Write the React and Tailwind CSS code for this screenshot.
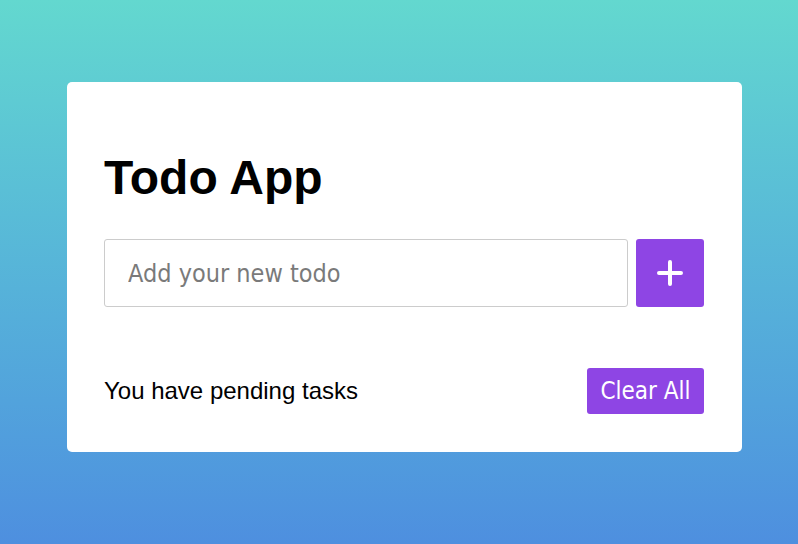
import React, { useState } from 'react';

export default function App() {
  const [text, setText] = useState('');

  return (
    <div className="min-h-screen w-full bg-gradient-to-b from-[#63d8cf] to-[#4e8fdf] pt-[82px] pl-[67px]">
      <div className="w-[675px] h-[370px] bg-white rounded-[5px] pl-[37px] pr-[38px] pt-[68px] flex flex-col">
        <h1 className="text-[48px] leading-[55px] font-bold text-black font-['Liberation_Sans',Arial,sans-serif]">
          Todo App
        </h1>

        <div className="mt-[34px] flex gap-[8px]">
          <input
            value={text}
            onChange={(e) => setText(e.target.value)}
            placeholder="Add your new todo"
            className="w-[524px] h-[68px] border border-[#cccccc] rounded-[3px] px-[23px] text-[25px] outline-none placeholder:text-[#7a7a7a] font-['DejaVu_Sans_Condensed','DejaVu_Sans',sans-serif]"
          />
          <button className="w-[68px] h-[68px] bg-[#8e45e4] rounded-[3px] flex items-center justify-center">
            <svg width="28" height="28" viewBox="0 0 28 28" fill="none" stroke="white" strokeWidth="4" strokeLinecap="round">
              <path d="M14 3v22M3 14h22" />
            </svg>
          </button>
        </div>

        <div className="mt-[61px] flex items-center justify-between">
          <span className="text-[24px] text-black font-['Liberation_Sans',Arial,sans-serif]">
            You have pending tasks
          </span>
          <button className="w-[117px] h-[46px] bg-[#8e45e4] rounded-[3px] text-white text-[24px] font-['DejaVu_Sans_Condensed','DejaVu_Sans',sans-serif]">
            Clear All
          </button>
        </div>
      </div>
    </div>
  );
}
